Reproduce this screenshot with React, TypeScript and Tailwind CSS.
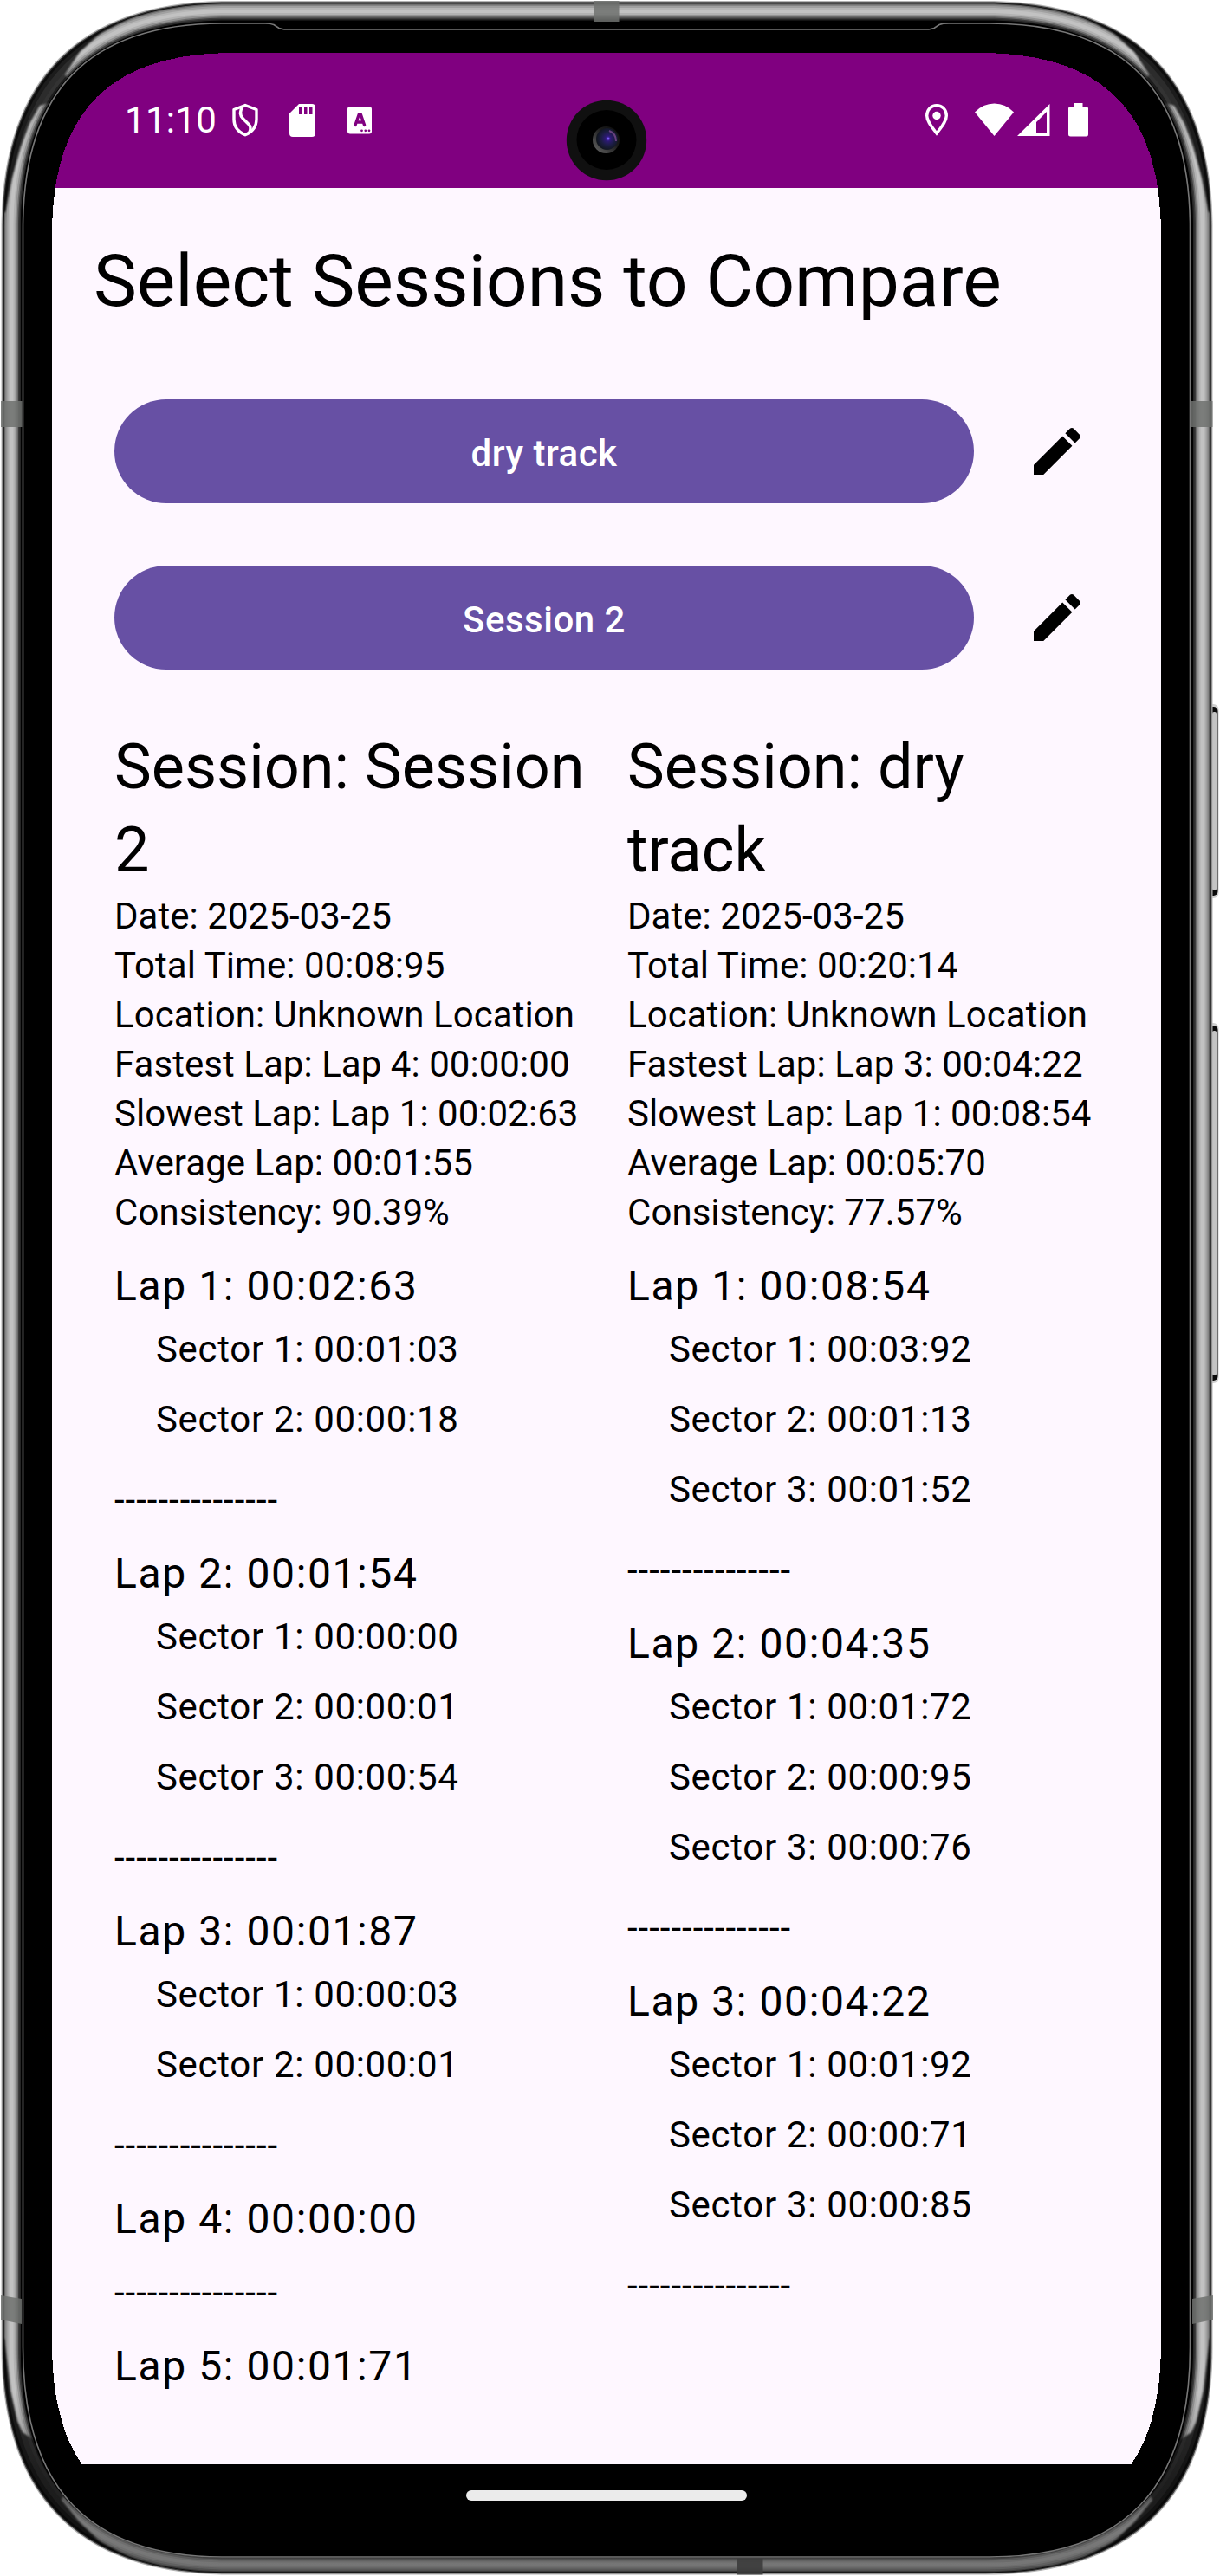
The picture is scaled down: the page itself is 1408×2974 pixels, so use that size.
type Lap = { time: string; sectors: string[] };
type Session = { name: string; details: string[]; laps: Lap[]; openEnded?: boolean };

const sessions: Session[] = [
  {
    name: "Session 2",
    details: [
      "Date: 2025-03-25",
      "Total Time: 00:08:95",
      "Location: Unknown Location",
      "Fastest Lap: Lap 4: 00:00:00",
      "Slowest Lap: Lap 1: 00:02:63",
      "Average Lap: 00:01:55",
      "Consistency: 90.39%",
    ],
    laps: [
      { time: "00:02:63", sectors: ["00:01:03", "00:00:18"] },
      { time: "00:01:54", sectors: ["00:00:00", "00:00:01", "00:00:54"] },
      { time: "00:01:87", sectors: ["00:00:03", "00:00:01"] },
      { time: "00:00:00", sectors: [] },
      { time: "00:01:71", sectors: [] },
    ],
    openEnded: true,
  },
  {
    name: "dry track",
    details: [
      "Date: 2025-03-25",
      "Total Time: 00:20:14",
      "Location: Unknown Location",
      "Fastest Lap: Lap 3: 00:04:22",
      "Slowest Lap: Lap 1: 00:08:54",
      "Average Lap: 00:05:70",
      "Consistency: 77.57%",
    ],
    laps: [
      { time: "00:08:54", sectors: ["00:03:92", "00:01:13", "00:01:52"] },
      { time: "00:04:35", sectors: ["00:01:72", "00:00:95", "00:00:76"] },
      { time: "00:04:22", sectors: ["00:01:92", "00:00:71", "00:00:85"] },
    ],
  },
];

/* Rounded rectangle with continuous (squircle-like) corners. */
function squircle(x0: number, y0: number, x1: number, y1: number, a: number, k: number) {
  const c = a * k;
  return [
    `M${x0 + a} ${y0}H${x1 - a}`,
    `C${x1 - c} ${y0} ${x1} ${y0 + c} ${x1} ${y0 + a}`,
    `V${y1 - a}`,
    `C${x1} ${y1 - c} ${x1 - c} ${y1} ${x1 - a} ${y1}`,
    `H${x0 + a}`,
    `C${x0 + c} ${y1} ${x0} ${y1 - c} ${x0} ${y1 - a}`,
    `V${y0 + a}`,
    `C${x0} ${y0 + c} ${x0 + c} ${y0} ${x0 + a} ${y0}Z`,
  ].join("");
}

const shell = (inset: number) =>
  squircle(1.5 + inset, 1 + inset, 1399.5 - inset, 2972.5 - inset, 262 - inset, 0.344);

const screenHole = squircle(60, 61, 1340, 2917, 210, 0.32);

const darkRings: [number, string][] = [
  [0, "#b4b4b4"],
  [1.2, "#3a3a3a"],
  [2.4, "#0c0c0c"],
  [5, "#1c1c1c"],
  [9, "#2c2c2c"],
  [15, "#333333"],
  [19, "#1d1d1d"],
  [22, "#000000"],
];

const lightRings: [number, string][] = [
  [3.2, "#5f5f5f"],
  [4.4, "#858585"],
  [6, "#a0a0a0"],
  [8, "#b6b6b6"],
  [10, "#c2c2c2"],
  [14, "#b2b2b2"],
  [16, "#949494"],
  [18, "#6a6a6a"],
  [19.5, "#3c3c3c"],
  [21, "#262626"],
  [22.5, "#000000"],
];

function SideButton({ y, h }: { y: number; h: number }) {
  return (
    <g>
      <rect x="1390" y={y - 3} width="16.5" height={h + 6} rx="6" fill="#777" opacity="0.35" />
      <rect x="1390" y={y} width="15.5" height={h} rx="5" fill="#0a0a0a" />
      <rect x="1399" y={y + 6} width="5" height={h - 12} rx="2" fill="#c4c4c4" />
    </g>
  );
}

function DeviceFrame() {
  return (
    <svg
      aria-hidden="true"
      className="pointer-events-none absolute inset-0"
      width="1408"
      height="2974"
      viewBox="0 0 1408 2974"
    >
      <defs>
        <mask id="bezelHole" maskUnits="userSpaceOnUse" x="0" y="0" width="1408" height="2974">
          <rect width="1408" height="2974" fill="#fff" />
          <path d={screenHole} fill="#000" shapeRendering="crispEdges" />
        </mask>
        <filter id="soft" x="-5%" y="-5%" width="110%" height="110%">
          <feGaussianBlur stdDeviation="1.2" />
        </filter>
        <mask id="highlights" maskUnits="userSpaceOnUse" x="0" y="0" width="1408" height="2974">
          <rect width="1408" height="2974" fill="#fff" />
          <g fill="#000" filter="url(#soft)">
            <path d="M-20-20H190V8L150 20L115 39L92 60L75 86L90 110L46 122L34 143L24 170L14 205L6 245H-20Z" />
            <path d="M1428-20H1211V8L1251 20L1286 39L1309 60L1326 86L1311 110L1355 122L1367 143L1377 170L1387 205L1395 245H1428Z" />
            <path d="M-20 2994H190V2965L150 2953L115 2934L92 2912L71 2886L90 2850L26 2808L20 2795L12 2760L5 2700H-20Z" />
            <path d="M1428 2994H1211V2965L1251 2953L1286 2934L1309 2912L1330 2886L1311 2850L1375 2808L1381 2795L1389 2760L1396 2700H1428Z" />
          </g>
        </mask>
        <linearGradient id="shade" x1="0" y1="0" x2="0" y2="1">
          <stop offset="0.93" stopColor="#000" stopOpacity="0" />
          <stop offset="0.965" stopColor="#000" stopOpacity="0.35" />
          <stop offset="1" stopColor="#000" stopOpacity="0.4" />
        </linearGradient>
        <radialGradient id="lens" cx="0.55" cy="0.48" r="0.55">
          <stop offset="0" stopColor="#4a28b8" />
          <stop offset="0.25" stopColor="#2b1a70" />
          <stop offset="0.6" stopColor="#1b1d40" />
          <stop offset="1" stopColor="#10151c" />
        </radialGradient>
        <linearGradient id="lensRim" x1="0" y1="1" x2="1" y2="0">
          <stop offset="0" stopColor="#6b6b6b" />
          <stop offset="0.6" stopColor="#1b1b1b" />
          <stop offset="1" stopColor="#0a0a0a" />
        </linearGradient>
      </defs>

      <g mask="url(#bezelHole)">
        <SideButton y={816} h={218} />
        <SideButton y={1184} h={410} />
        {darkRings.map(([inset, color]) => (
          <path key={inset} d={shell(inset)} fill={color} />
        ))}
        <g mask="url(#highlights)">
          {lightRings.map(([inset, color]) => (
            <path key={inset} d={shell(inset)} fill={color} />
          ))}
        </g>
        <path d={shell(3)} fill="url(#shade)" />
        <path d={squircle(24, 24, 1376, 2953, 240, 0.33)} fill="#000" />
        <path
          d="M328 34L322 32.5L316 28.5Q312 27 306 27H258C102 27 26.500 105 26.500 264V2710C26.500 2872 102 2952 258 2952H1142C1298 2952 1373.500 2872 1373.500 2710V264C1373.500 105 1298 27 1142 27H1095Q1088 27 1084 28.500L1078 32.500L1072 34Z"
          fill="none"
          stroke="#777"
          strokeWidth="1.6"
        />
        <g fill="#6f716e" opacity="0.85">
          <rect x="1" y="463" width="24.500" height="30" />
          <rect x="1375" y="463" width="24.500" height="30" />
          <path d="M1 2650L25 2654V2683L1 2678Z" />
          <path d="M1400 2650L1376 2654V2683L1400 2678Z" />
          <rect x="686" y="1" width="28.500" height="24" />
        </g>
        <rect x="851" y="2953.500" width="29.500" height="19" fill="#3c3c3c" opacity="0.9" />
      </g>

      <g>
        <circle cx="700" cy="162" r="46.200" fill="#101010" />
        <circle cx="700" cy="161.500" r="34.500" fill="#000" />
        <circle cx="699.500" cy="161.500" r="15.500" fill="url(#lensRim)" />
        <circle cx="700.500" cy="160.500" r="12.500" fill="url(#lens)" />
        <path d="M703 151Q711 154 711 163" fill="none" stroke="#7a4a90" strokeWidth="2" opacity="0.8" />
        <circle cx="702" cy="160" r="1.500" fill="#7a5bf0" />
      </g>
    </svg>
  );
}

function StatusBar() {
  return (
    <header className="flex h-[156px] items-start bg-[#800080] pt-[49px] pl-[84px] text-white">
      <span className="w-[123px] text-[42px] leading-[57px] tracking-[0.3px]">11:10</span>
      <svg className="mt-[9px]" width="32" height="40" viewBox="0 0 32 40" fill="none" stroke="#fff" strokeWidth="3.400" strokeLinejoin="round">
        <path d="M16 2.500L29 7.500V19C29 27.500 23.500 33.500 16 36.800C8.500 33.500 3 27.500 3 19V7.500Z" />
        <path d="M13 4C9 10 9.500 14 13.500 18L20 24.500C23 27.500 22.500 30 21 33.500" />
      </svg>
      <svg className="mt-[10px] ml-[35px]" width="30" height="38" viewBox="0 0 30 38" fill="#fff">
        <path fillRule="evenodd" d="M11 0H26Q30 0 30 4V34Q30 38 26 38H4Q0 38 0 34V11ZM11 4V12H14.500V4ZM17 4V12H20.500V4ZM23 4V12H26.500V4Z" />
      </svg>
      <svg className="mt-[13px] ml-[37px]" width="28" height="32" viewBox="0 0 28 32">
        <rect width="28" height="31.500" rx="3" fill="#fff" />
        <path d="M9 21.500L13.300 9H15.300L19.600 21.500M11 18H17.600" fill="none" stroke="#800080" strokeWidth="3.400" strokeLinecap="round" strokeLinejoin="round" />
        <g fill="#800080">
          <circle cx="16.500" cy="27.800" r="1.400" />
          <circle cx="20.800" cy="27.800" r="1.400" />
          <circle cx="25" cy="27.800" r="1.400" />
        </g>
      </svg>
      <div className="mr-[84px] ml-auto flex items-start pt-[9px]">
        <svg width="28" height="40" viewBox="0 0 28 40">
          <path d="M14 2.800C7.200 2.800 2.700 7.800 2.700 14.500C2.700 21 8 27 14 35C20 27 25.300 21 25.300 14.500C25.300 7.800 20.800 2.800 14 2.800Z" fill="none" stroke="#fff" strokeWidth="3.400" />
          <circle cx="14" cy="14.500" r="4.700" fill="#fff" />
        </svg>
        <svg className="ml-[30px]" width="45" height="40" viewBox="0 0 45 40" fill="#fff">
          <path d="M0 10.500Q9.500 0.500 22.500 0.500T45 10.500L22.500 38Z" />
        </svg>
        <svg className="ml-[4px]" width="38" height="40" viewBox="0 0 38 40" fill="#fff">
          <path fillRule="evenodd" d="M0 38L37.500 1V38ZM22 34.300H34V10L22 22Z" />
        </svg>
        <svg className="ml-[21px]" width="23" height="40" viewBox="0 0 23 40" fill="#fff">
          <path d="M7 0H16.500V4H20.500Q23 4 23 6.500V36Q23 38.500 20.500 38.500H2.500Q0 38.500 0 36V6.500Q0 4 2.500 4H7Z" />
        </svg>
      </div>
    </header>
  );
}

function SessionPicker({ label }: { label: string }) {
  return (
    <div className="flex items-center">
      <button className="h-[120px] w-[992px] rounded-full bg-[#6750a4] pt-[5px] text-[42px] font-medium leading-[60px] tracking-[0.5px] text-white">
        {label}
      </button>
      <button aria-label={`Edit ${label}`} className="ml-[60px]">
        <svg width="72" height="72" viewBox="0 0 24 24" fill="#000">
          <path d="M3 17.250V21h3.750L17.810 9.940l-3.750-3.750L3 17.250zM20.710 7.040c0.390-0.390 0.390-1.020 0-1.410l-2.340-2.340c-0.390-0.390-1.020-0.390-1.410 0l-1.830 1.830 3.750 3.750 1.830-1.830z" />
        </svg>
      </button>
    </div>
  );
}

function SessionColumn({ session }: { session: Session }) {
  return (
    <section className="w-[592px]">
      <h2 className="w-[550px] text-[72px] leading-[96px]">Session: {session.name}</h2>
      <div className="-mt-px">
        {session.details.map((line) => (
          <p key={line} className="text-[42px] leading-[57px] tracking-[0.05px] whitespace-nowrap">
            {line}
          </p>
        ))}
      </div>
      <div className="pt-[21px]">
        {session.laps.map((lap, i) => (
          <div key={i}>
            <h3 className="text-[48px] leading-[72px] tracking-[1.6px]">
              Lap {i + 1}: {lap.time}
            </h3>
            {lap.sectors.map((time, s) => (
              <p key={s} className="pt-2 pb-4 pl-12 text-[42px] leading-[57px] tracking-[0.68px]">
                Sector {s + 1}: {time}
              </p>
            ))}
            {!(session.openEnded && i === session.laps.length - 1) && (
              <p className="pt-[20px] pb-[21px] text-[42px] leading-[57px] tracking-[1px]">---------------</p>
            )}
          </div>
        ))}
      </div>
    </section>
  );
}

export default function App() {
  return (
    <div className="relative h-[2974px] w-[1408px] overflow-hidden bg-white pt-[61px] pl-[60px] font-['Roboto',sans-serif] text-black">
      <div className="flex h-[2856px] w-[1280px] flex-col overflow-hidden rounded-[130px] bg-[#fef7ff]">
        <StatusBar />
        <main className="flex-1 overflow-hidden">
          <h1 className="pt-[54px] pl-12 text-[84px] leading-[108px] tracking-[-0.03px]">Select Sessions to Compare</h1>
          <div className="flex flex-col gap-[72px] pt-[82px] pl-[72px]">
            <SessionPicker label="dry track" />
            <SessionPicker label="Session 2" />
          </div>
          <div className="flex pt-[65px] pl-[72px]">
            {sessions.map((session) => (
              <SessionColumn key={session.name} session={session} />
            ))}
          </div>
        </main>
        <footer className="flex h-[72px] shrink-0 items-center justify-center bg-black">
          <div className="h-3 w-[324px] rounded-full bg-[#ebebeb]" />
        </footer>
      </div>
      <DeviceFrame />
    </div>
  );
}
